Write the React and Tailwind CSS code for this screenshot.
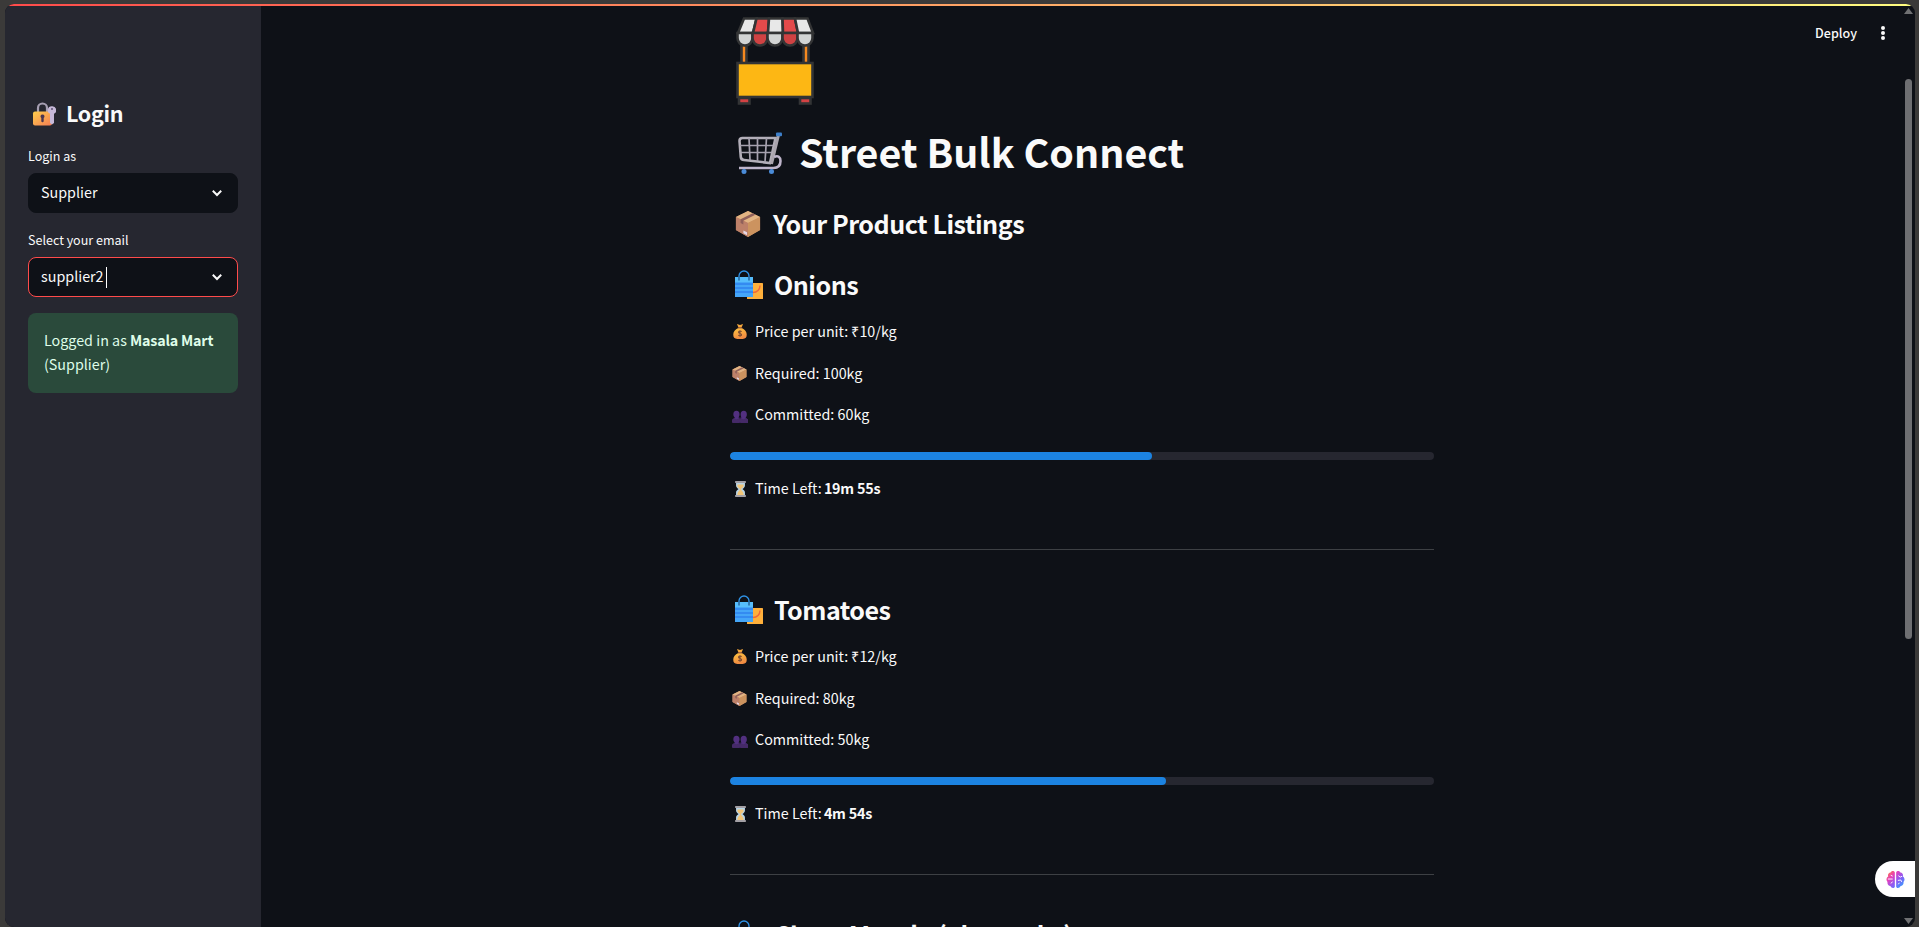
import React from "react";

function Bag() {
  return (
    <svg viewBox="0 0 30 30" className="h-full w-full">
      <rect x="13" y="13" width="16" height="16" rx=".6" fill="#ffb03b" />
      <path d="M26 15.500c0 4-3 7-7 7" fill="none" stroke="#f0683a" strokeWidth="1.400" />
      <path d="M1 7h18v20H1z" fill="#45a6f8" />
      <path d="M1 7h18v5H1z" fill="#56bdfc" />
      <path d="M1 14h18M1 18h18M1 22h18" stroke="#2f83ee" strokeWidth="1.300" />
      <path d="M5 7V6a5 5 0 0 1 10 0v1" fill="none" stroke="#2f93e8" strokeWidth="1.300" />
      <path d="M5 7v3.500M15 7v3.500" fill="none" stroke="#1b4f86" strokeWidth="1.200" />
    </svg>
  );
}

function Box() {
  return (
    <svg viewBox="0 0 28 30" className="h-full w-full">
      <path d="M14 1 27 7.500v14L14 29 1 21.500v-14z" fill="#c58f66" />
      <path d="M14 1 27 7.500 14 14 1 7.500z" fill="#e2b483" />
      <path d="M1 7.500 14 14v15L1 21.500z" fill="#bd8069" />
      <path d="M14 14 27 7.500v14L14 29z" fill="#cc935f" />
      <path d="m6 10 13-6.500 3 1.500L9 11.500v4l-3-1.500z" fill="#90605a" />
      <path d="m9 22 4 2v3l-4-2z" fill="#e6d9e8" />
    </svg>
  );
}

function Money() {
  return (
    <svg viewBox="0 0 16 18" className="h-full w-full">
      <defs>
        <linearGradient id="money" x1="0" y1="0" x2="0.3" y2="1">
          <stop offset="0" stopColor="#ffc640" />
          <stop offset="1" stopColor="#ef8a42" />
        </linearGradient>
      </defs>
      <path d="M4.500.500 8 1.500l3.500-1L9.500 5h-3z" fill="#f5a83c" />
      <path d="M6 5h4c3.500 1.500 5.700 4.500 5.700 7.500 0 3.500-1.200 5-4.700 5H5c-3.500 0-4.700-1.500-4.700-5C.300 9.500 2.500 6.500 6 5z" fill="url(#money)" />
      <path d="M5.500 4.800h5" stroke="#8b4a3c" strokeWidth="1.200" />
      <path d="M9.800 9.200C9 8 6.300 8.200 6.300 9.800c0 1.700 3.500 1 3.500 2.800 0 1.600-2.800 1.700-3.700.4M8 7.500v7.500" fill="none" stroke="#7a4a34" strokeWidth="1.200" />
    </svg>
  );
}

function People() {
  return (
    <svg viewBox="0 0 18 14" className="h-full w-full">
      <g fill="#523080">
        <path d="M1.500 4.500a3.500 4 0 0 1 7 0c0 2-.8 3-1.300 3.700H8.500V14H1v-2.500c0-1.500.8-2 2-2.500V8C2 7.300 1.500 6 1.500 4.500z" />
        <path d="M9.700 4.500a3.500 4 0 0 1 7 0c0 2-.6 3-1.200 3.700V9c1.500.4 2.500 1 2.500 2.500V14H9.500V8.200h1.300c-.7-.8-1.100-2-1.100-3.700z" />
      </g>
      <path d="M0 14v-2.500C0 10 1 9.300 3 9c1 1.300 3.200 1.300 4.300 0 1 .2 1.700.7 1.700 2 0-1.300.7-1.800 1.700-2 1 1.300 3.300 1.300 4.300 0 2 .3 3 1 3 2.500V14z" fill="#452a68" />
    </svg>
  );
}

function Hourglass() {
  return (
    <svg viewBox="0 0 12 18" className="h-full w-full">
      <path d="M1 2h10v3c0 2-1.500 3-2.800 4 1.300 1 2.800 2 2.800 4v3H1v-3c0-2 1.500-3 2.800-4C2.500 8 1 7 1 5z" fill="#b9d5e6" />
      <path d="M2.500 4h7v1.500C9.500 7 7 8 6.500 9h-1C5 8 2.500 7 2.500 5.500zM5.500 9h1c.3 2 3 3 3 5.500V16h-7v-1.500c0-2.500 2.700-3.500 3-5.500z" fill="#f2c578" />
      <path d="M0 0h12v2.200H0zM0 15.800h12V18H0z" fill="#a3a0a5" />
    </svg>
  );
}

function Lock() {
  return (
    <svg viewBox="0 0 24 24" className="h-full w-full">
      <defs>
        <linearGradient id="lock" x1="0" y1="0" x2="1" y2="1">
          <stop offset="0" stopColor="#ffce4b" />
          <stop offset="1" stopColor="#f47c55" />
        </linearGradient>
      </defs>
      <path d="M6 11V6a4.500 4.500 0 0 1 9 0v5" fill="none" stroke="#a69fb2" strokeWidth="2.200" />
      <rect x="1" y="9.500" width="19" height="14" rx="2" fill="url(#lock)" />
      <path d="M20 4.200a4 4 0 0 1 2 7.600V21l-2 1.500-2-1.500v-9.200a4 4 0 0 1 2-7.600z" fill="#c6b8d8" />
      <circle cx="20" cy="7" r="1" fill="#5b5270" />
      <path d="M10.500 12.500a2 2 0 0 1 1.200 3.600V19a1.200 1.200 0 0 1-2.400 0v-2.900a2 2 0 0 1 1.200-3.600z" fill="#4a3550" />
    </svg>
  );
}

function Cart() {
  return (
    <svg viewBox="0 0 44 42" className="h-full w-full" fill="none">
      <path d="M1.500 9c0-2 1-3 3-3h33L32 31 6 28c-1.800-.2-3-1-3.200-3z" stroke="#b3afb9" strokeWidth="2.600" />
      <path d="M2 13.500h33M2.500 20.500h31M11 6l1 22M19.500 6v23M28.500 6l-1.500 24" stroke="#a5a1ae" strokeWidth="1.700" />
      <path d="M40.500 3 33.500 32" stroke="#aaa5ae" strokeWidth="3" />
      <path d="M36 25c4-2 6.500 0 6.500 4 0 4.500-2.500 7-7 7H1" stroke="#beb5cb" strokeWidth="2.600" />
      <rect x="38" y="0.500" width="6" height="3.800" rx="1" fill="#3d7fc9" />
      <circle cx="6" cy="39.500" r="2.500" fill="#4a8bd8" />
      <circle cx="33.500" cy="39.500" r="2.500" fill="#4a8bd8" />
    </svg>
  );
}

function Stall() {
  return (
    <svg viewBox="0 0 80 88" className="h-[88px] w-[80px]">
      <g stroke="#333435" strokeWidth="2.600">
        <rect x="5.500" y="28" width="5" height="19" fill="#f6891f" />
        <rect x="67.500" y="28" width="5" height="19" fill="#f6891f" />
        <rect x="3" y="81" width="10.500" height="5.500" fill="#d24244" />
        <rect x="64" y="81" width="10.500" height="5.500" fill="#d24244" />
        <rect x="1.500" y="46" width="75" height="34" fill="#fdb714" />
        <path d="M8 1.500H20.500L17 16H2z" fill="#e8e8e8" />
        <path d="M20.500 1.500H33L32 16H17z" fill="#e34a4b" />
        <path d="M33 1.500H46.500L47 16H32z" fill="#e8e8e8" />
        <path d="M46.500 1.500H59L62 16H47z" fill="#e34a4b" />
        <path d="M59 1.500H71.500L77 16H62z" fill="#e8e8e8" />
        <path d="M1.500 16h15v5a7.500 7.500 0 0 1-15 0z" fill="#d2d4d4" />
        <path d="M16.500 16h15v5a7.500 7.500 0 0 1-15 0z" fill="#cf4243" />
        <path d="M31.500 16h15v5a7.500 7.500 0 0 1-15 0z" fill="#d2d4d4" />
        <path d="M46.500 16h15v5a7.500 7.500 0 0 1-15 0z" fill="#cf4243" />
        <path d="M61.500 16h15v5a7.500 7.500 0 0 1-15 0z" fill="#d2d4d4" />
      </g>
    </svg>
  );
}

function Brain() {
  return (
    <svg viewBox="0 0 20 20" className="h-[19px] w-[19px]">
      <defs>
        <linearGradient id="brain" x1="0" y1="0" x2="1" y2="1">
          <stop offset="0" stopColor="#ff8a2a" />
          <stop offset="0.3" stopColor="#e83fb8" />
          <stop offset="0.6" stopColor="#8a5cf6" />
          <stop offset="1" stopColor="#1fb0ff" />
        </linearGradient>
      </defs>
      <path d="M9.300 2.500C8.500.5 5.500.6 4.800 2.700 2.600 3 1.600 5 2.300 6.800.2 8-.1 11 1.600 12.500c-.5 2.500 1 4.300 3 4.300 1 2.500 4 2.700 4.700.7zM10.700 2.500c.8-2 3.800-1.900 4.500.2 2.200.3 3.200 2.300 2.500 4.100 2.100 1.200 2.400 4.200.7 5.700.5 2.500-1 4.300-3 4.300-1 2.500-4 2.700-4.700.7z" fill="url(#brain)" />
      <path d="M2 9.500h5M5 5.500l2 1M5 14l2-1.500M13 6l2 1.500 2-1M12.500 11l3-.5 1 2M13 15l1-1.500" fill="none" stroke="#fff" strokeWidth="1" />
    </svg>
  );
}

function Select({ label, value, focused }) {
  return (
    <div>
      <div className="flex h-6 items-start pt-px text-[12.530px] leading-[20px]">{label}</div>
      <div className={"mt-1 flex h-10 items-center rounded-lg border bg-[#0e1117] pl-3 pr-[13px] text-[14.320px] " + (focused ? "border-[#ff4b4b]" : "border-[#0e1117]")}>
        <span className="pb-[2px]">{value}</span>
        {focused && <span className="ml-[2px] h-[21px] w-px bg-white" />}
        <svg viewBox="0 0 14 10" className="ml-auto h-[10px] w-[14px]">
          <path d="M2.800 2.800 7 7l4.200-4.200" fill="none" stroke="#fafafa" strokeWidth="2" />
        </svg>
      </div>
    </div>
  );
}

function Line({ icon, children, className = "" }) {
  return (
    <div className={"flex h-[25px] items-center text-[14.320px] " + className}>
      <span className="mr-[6px] flex w-[19px] justify-end">{icon}</span>
      <span className="pb-[2px]">{children}</span>
    </div>
  );
}

function ProductTitle({ children }) {
  return (
    <h3 className="flex h-[34px] items-center whitespace-nowrap text-[25.070px] font-bold tracking-[-0.5px]">
      <span className="ml-1 mr-[10px] h-[30px] w-[30px]"><Bag /></span>
      {children}
    </h3>
  );
}

function Product({ name, price, required, committed, left, percent }) {
  return (
    <section>
      <ProductTitle>{name}</ProductTitle>
      <Line className="mt-[17px]" icon={<span className="mr-[2px] h-[17px] w-[14px]"><Money /></span>}>Price per unit: ₹{price}/kg</Line>
      <Line className="mt-[17px]" icon={<span className="mr-[2px] h-[17px] w-[15px]"><Box /></span>}>Required: {required}kg</Line>
      <Line className="mt-4" icon={<span className="mr-px mt-[3px] h-[13px] w-[16px]"><People /></span>}>Committed: {committed}kg</Line>
      <div className="mt-[25px] h-2 overflow-hidden rounded bg-[#262730]">
        <div className="h-full rounded bg-[#1c83e1]" style={{ width: percent + "%" }} />
      </div>
      <Line className="mt-4" icon={<span className="mr-[3px] h-[16px] w-[11px]"><Hourglass /></span>}>Time Left: <b className="-ml-px tracking-[-0.2px]">{left}</b></Line>
      <hr className="mb-[43px] mt-[48px] border-[#3d4044]" />
    </section>
  );
}

export default function App() {
  return (
    <div className="flex h-[927px] w-[1919px] overflow-hidden bg-[#3b3a39] pl-[5px] pr-1 pt-1 text-[#fafafa] [font-family:'Noto_Sans_CJK_SC',sans-serif]">
      <div className="relative flex h-[923px] w-[1910px] overflow-hidden rounded-[9px] bg-[#0e1117]">
        <div className="absolute inset-x-0 top-0 z-10 h-[2px] bg-[linear-gradient(90deg,#ff4b4b,#fffd80)]" />
        <aside className="w-[256px] shrink-0 bg-[#262730] pl-[23px] pr-[23px] pt-[93px]">
          <h2 className="flex h-[34px] items-center text-[21.490px] font-bold tracking-[-0.3px]">
            <span className="ml-1 mr-[10px] h-6 w-6"><Lock /></span>
            <span className="pb-[2px]">Login</span>
          </h2>
          <div className="mt-[14px]"><Select label="Login as" value="Supplier" /></div>
          <div className="mt-4"><Select label="Select your email" value="supplier2" focused /></div>
          <div className="mt-4 h-20 rounded-lg bg-[#2a4a3b] px-4 pt-[15px] text-[14.320px] leading-6 text-[#dffde9]">
            Logged in as <b className="tracking-[-0.2px]">Masala Mart</b>
            <br />
            (Supplier)
          </div>
        </aside>
        <main className="ml-[469px] w-[704px] shrink-0 pt-[13px]">
          <div className="ml-[6px]"><Stall /></div>
          <h1 className="mt-[20px] flex h-[56px] items-center text-[39.390px] font-bold">
            <span className="ml-[8px] mr-[17px] h-[42px] w-[44px]"><Cart /></span>
            <span className="pb-1">Street Bulk Connect</span>
          </h1>
          <h2 className="mb-[27px] mt-[26px] flex h-[34px] items-center text-[25.070px] font-bold tracking-[-0.48px]">
            <span className="ml-[5px] mr-[12px] h-[28px] w-[26px]"><Box /></span>
            Your Product Listings
          </h2>
          <Product name="Onions" price="10" required="100" committed="60" left="19m 55s" percent={60} />
          <Product name="Tomatoes" price="12" required="80" committed="50" left="4m 54s" percent={62} />
          <ProductTitle>Chaat Masala (1kg packs)</ProductTitle>
        </main>
        <div className="absolute right-[30px] top-[15px] flex h-7 items-center gap-[24px] text-[12.530px] font-medium">
          Deploy
          <svg viewBox="0 0 4 14" className="h-[14px] w-1">
            <path d="M2 0a2 2 0 1 1 0 4 2 2 0 0 1 0-4zm0 5a2 2 0 1 1 0 4 2 2 0 0 1 0-4zm0 5a2 2 0 1 1 0 4 2 2 0 0 1 0-4z" fill="#fafafa" />
          </svg>
        </div>
        <div className="absolute bottom-[3px] right-[2px] top-[4px] flex w-[9px] flex-col items-center">
          <svg viewBox="0 0 9 6" className="h-[6px] w-[9px] shrink-0"><path d="M4.500 0 9 6H0z" fill="#707173" /></svg>
          <div className="mt-[65px] h-[560px] w-[7px] shrink-0 rounded-full bg-[#6e6f72]" />
          <svg viewBox="0 0 9 6" className="mt-auto h-[6px] w-[9px] shrink-0"><path d="M0 0h9L4.500 6z" fill="#707173" /></svg>
        </div>
        <div className="absolute right-0 top-[857px] flex h-9 w-10 items-center rounded-l-full bg-white pl-[11px]">
          <Brain />
        </div>
      </div>
    </div>
  );
}
